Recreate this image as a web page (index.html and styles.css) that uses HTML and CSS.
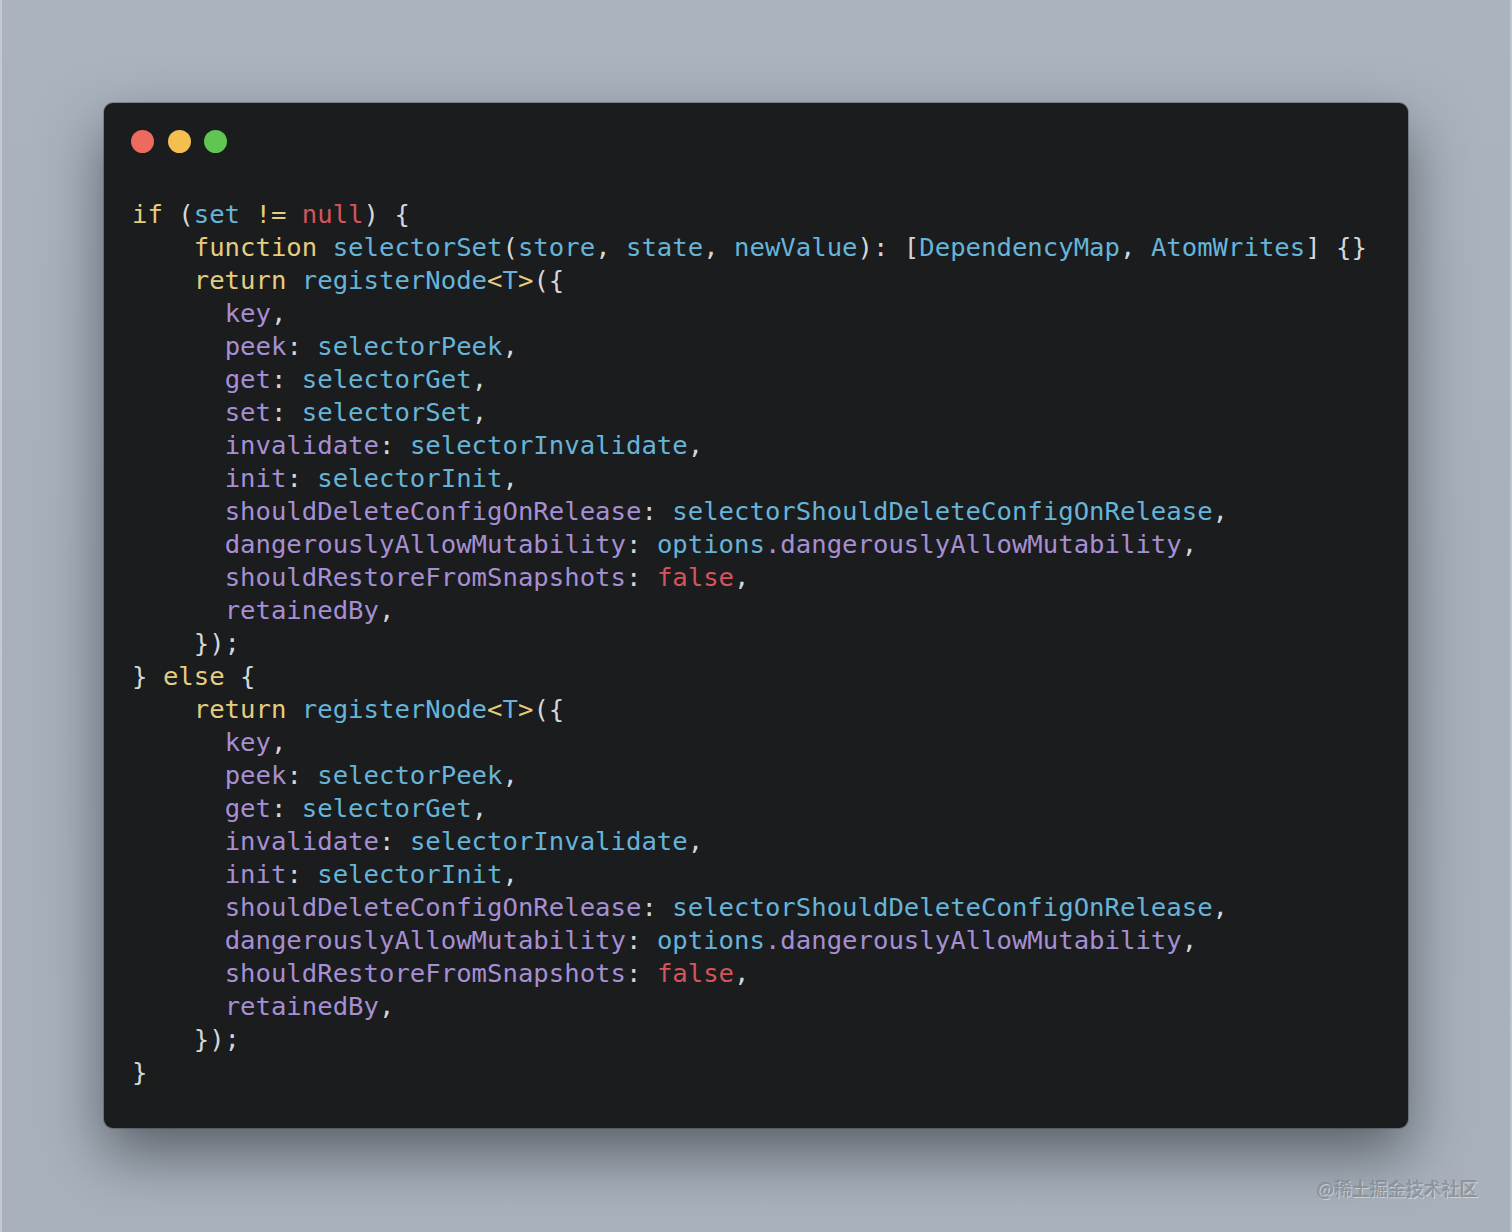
FILE: index.html
```html
<!DOCTYPE html>
<html lang="en">
<head>
<meta charset="utf-8">
<title>Code snippet</title>
<link rel="stylesheet" href="styles.css">
</head>
<body>
<div class="stage">
  <div class="window">
    <div class="lights">
      <span class="light red"></span>
      <span class="light yellow"></span>
      <span class="light green"></span>
    </div>
<pre class="code"><span class="k">if</span> (<span class="f">set</span> <span class="k">!=</span> <span class="r">null</span>) {
    <span class="k">function</span> <span class="f">selectorSet</span>(<span class="f">store</span>, <span class="f">state</span>, <span class="f">newValue</span>): [<span class="f">DependencyMap</span>, <span class="f">AtomWrites</span>] {}
    <span class="k">return</span> <span class="f">registerNode</span><span class="k">&lt;</span><span class="f">T</span><span class="k">&gt;</span>({
      <span class="p">key</span>,
      <span class="p">peek</span>: <span class="f">selectorPeek</span>,
      <span class="p">get</span>: <span class="f">selectorGet</span>,
      <span class="p">set</span>: <span class="f">selectorSet</span>,
      <span class="p">invalidate</span>: <span class="f">selectorInvalidate</span>,
      <span class="p">init</span>: <span class="f">selectorInit</span>,
      <span class="p">shouldDeleteConfigOnRelease</span>: <span class="f">selectorShouldDeleteConfigOnRelease</span>,
      <span class="p">dangerouslyAllowMutability</span>: <span class="f">options</span><span class="p">.dangerouslyAllowMutability</span>,
      <span class="p">shouldRestoreFromSnapshots</span>: <span class="r">false</span>,
      <span class="p">retainedBy</span>,
    });
} <span class="k">else</span> {
    <span class="k">return</span> <span class="f">registerNode</span><span class="k">&lt;</span><span class="f">T</span><span class="k">&gt;</span>({
      <span class="p">key</span>,
      <span class="p">peek</span>: <span class="f">selectorPeek</span>,
      <span class="p">get</span>: <span class="f">selectorGet</span>,
      <span class="p">invalidate</span>: <span class="f">selectorInvalidate</span>,
      <span class="p">init</span>: <span class="f">selectorInit</span>,
      <span class="p">shouldDeleteConfigOnRelease</span>: <span class="f">selectorShouldDeleteConfigOnRelease</span>,
      <span class="p">dangerouslyAllowMutability</span>: <span class="f">options</span><span class="p">.dangerouslyAllowMutability</span>,
      <span class="p">shouldRestoreFromSnapshots</span>: <span class="r">false</span>,
      <span class="p">retainedBy</span>,
    });
}</pre>
  </div>
  <div class="watermark">@稀土掘金技术社区</div>
</div>
</body>
</html>
```

FILE: styles.css
```css
html, body {
  margin: 0;
  padding: 0;
}

body {
  width: 1512px;
  height: 1232px;
  overflow: hidden;
  background: linear-gradient(180deg, #abb4be 0%, #a8b1bb 50%, #a9b2bc 100%);
  font-family: "DejaVu Sans Mono", "Liberation Mono", monospace;
}

.stage {
  position: relative;
  height: 1232px;
  padding: 103px 104px 0 104px;
  box-sizing: border-box;
  border-left: 2px solid #c4cad0;
  border-right: 2px solid #bfc5cb;
}

.window {
  width: 1304px;
  height: 1025px;
  margin-left: -2px;
  box-sizing: border-box;
  background: #1a1c1e;
  border-radius: 9px;
  padding: 27px 26px 0 27px;
  box-shadow: 0 26px 60px rgba(36, 42, 50, 0.6), 0 0 0 1px rgba(60, 64, 70, 0.35);
}

.lights {
  display: flex;
  gap: 13.5px;
  height: 23px;
}

.light {
  width: 23px;
  height: 23px;
  border-radius: 50%;
  display: block;
}

.light.red { background: #ec6a5e; }
.light.yellow { background: #f4bf4f; }
.light.green { background: #61c554; }

.code {
  margin: 45px 0 0 1px;
  padding: 0;
  font-family: "DejaVu Sans Mono", "Liberation Mono", monospace;
  font-size: 25.65px;
  line-height: 33px;
  color: #d4d6d8;
  white-space: pre;
}

.k { color: #e4cd7f; }
.f { color: #67b4d8; }
.p { color: #a68fd2; }
.r { color: #d4545c; }

.watermark {
  position: absolute;
  right: 32px;
  top: 1176px;
  font-family: "Noto Sans CJK SC", "Noto Sans", sans-serif;
  font-size: 18px;
  line-height: 24px;
  color: #8d949c;
  text-shadow: 1px 1px 0 rgba(230, 234, 238, 0.6), -1px -1px 0 rgba(90, 96, 104, 0.35);
}
```
